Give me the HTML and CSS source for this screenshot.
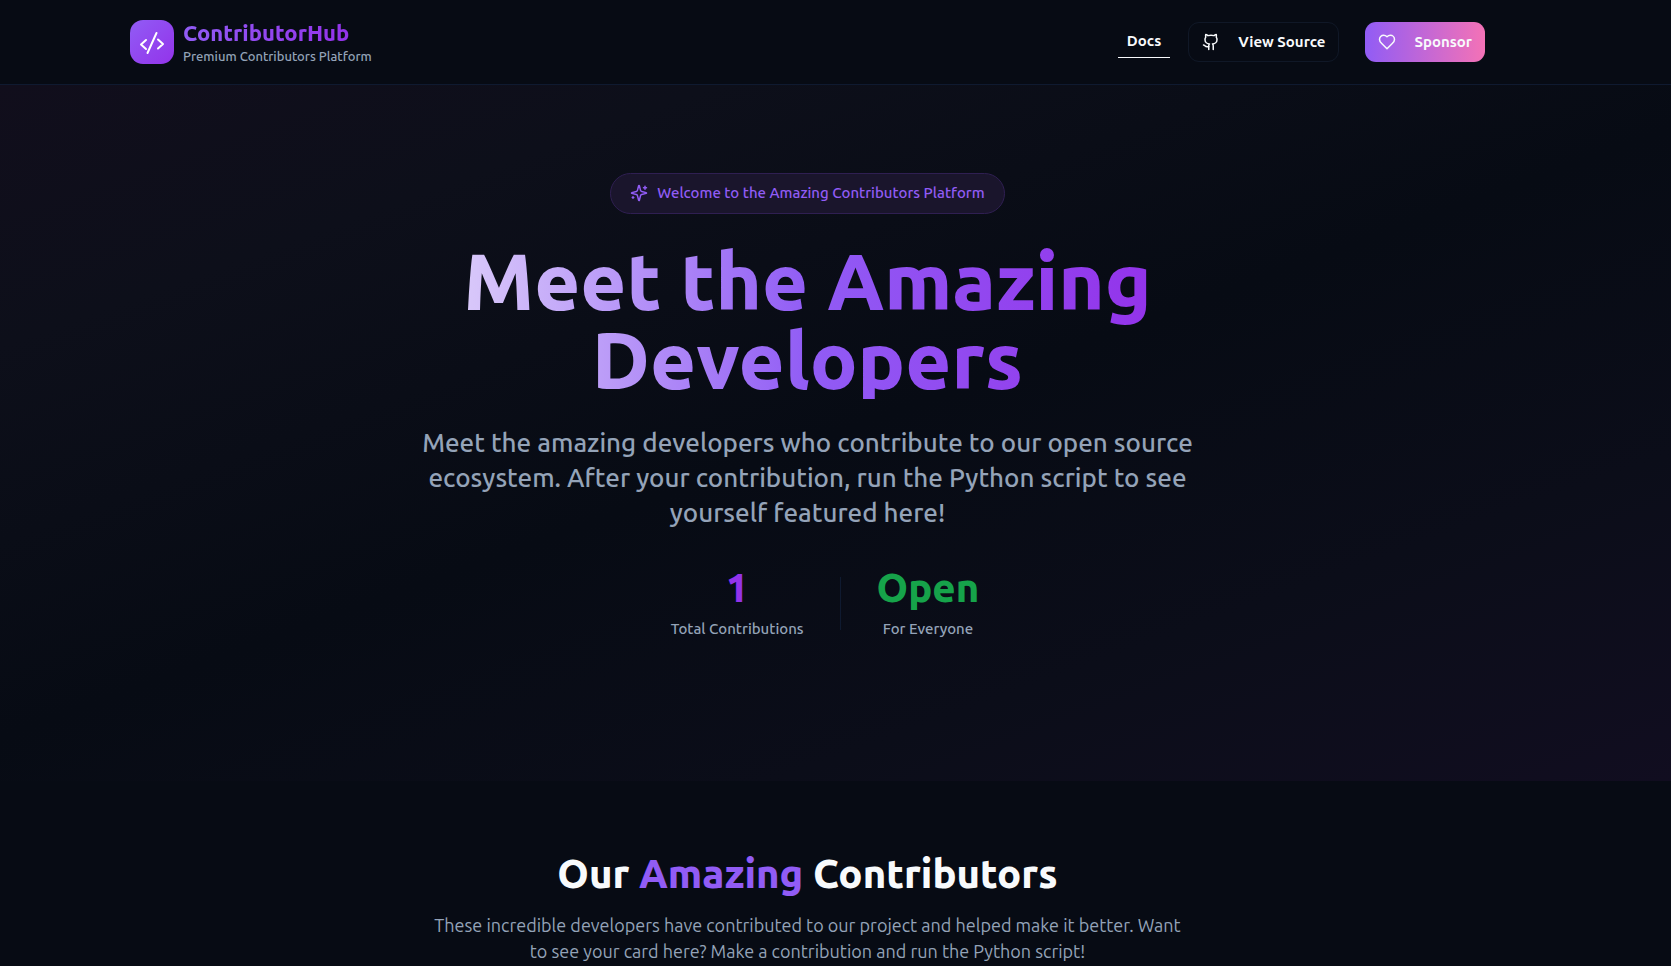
FILE: index.html
```html
<!DOCTYPE html>
<html lang="en">
<head>
<meta charset="utf-8">
<meta name="viewport" content="width=device-width, initial-scale=1">
<title>ContributorHub</title>
<link rel="stylesheet" href="styles.css">
</head>
<body>
<header class="topbar">
  <div class="topbar-inner">
    <a class="brand" href="#">
      <span class="brand-mark">
        <svg viewBox="0 0 26 26" width="26" height="26" fill="none" stroke="#fff" stroke-width="2" stroke-linecap="round" stroke-linejoin="round" aria-hidden="true"><path d="M7 11 2 15.500l5 4.500M19 10.500l5 4.500-5 4.500M17.500 4l-9 20"/></svg>
      </span>
      <span class="brand-text">
        <span class="brand-name">ContributorHub</span>
        <span class="brand-tag">Premium Contributors Platform</span>
      </span>
    </a>
    <nav class="nav">
      <a class="nav-link" href="#docs">Docs</a>
      <a class="btn btn-outline" href="#source">
        <svg class="icon" viewBox="0 0 24 24" aria-hidden="true"><path d="M15 22v-4a4.800 4.800 0 0 0-1-3.500c3 0 6-2 6-5.500.080-1.250-.270-2.480-1-3.500.280-1.150.280-2.350 0-3.500 0 0-1 0-3 1.500-2.640-.500-5.360-.500-8 0C6 2 5 2 5 2c-.300 1.150-.300 2.350 0 3.500A5.403 5.403 0 0 0 4 9c0 3.500 3 5.500 6 5.500-.390.490-.680 1.050-.850 1.650-.170.600-.220 1.230-.150 1.850v4"/><path d="M9 18c-4.510 2-5-2-7-2"/></svg>
        <span>View Source</span>
      </a>
      <a class="btn btn-sponsor" href="#sponsor">
        <svg class="icon" viewBox="0 0 24 24" aria-hidden="true"><path d="M19 14c1.490-1.460 3-3.210 3-5.500A5.500 5.500 0 0 0 16.500 3c-1.760 0-3 .500-4.500 2-1.500-1.500-2.740-2-4.500-2A5.500 5.500 0 0 0 2 8.500c0 2.300 1.500 4.050 3 5.500l7 7Z"/></svg>
        <span>Sponsor</span>
      </a>
    </nav>
  </div>
</header>
<main>
  <section class="hero">
    <div class="hero-inner">
      <div class="badge">
        <svg class="icon" viewBox="0 0 24 24" aria-hidden="true"><path d="M9.937 15.500A2 2 0 0 0 8.500 14.063l-6.135-1.582a.5.5 0 0 1 0-.962L8.500 9.936A2 2 0 0 0 9.937 8.500l1.582-6.135a.5.5 0 0 1 .963 0L14.063 8.500A2 2 0 0 0 15.500 9.937l6.135 1.581a.5.5 0 0 1 0 .964L15.500 14.063a2 2 0 0 0-1.437 1.437l-1.582 6.135a.5.5 0 0 1-.963 0z"/><path d="M20 3v4M22 5h-4M4 17v2M5 18H3"/></svg>
        <span>Welcome to the Amazing Contributors Platform</span>
      </div>
      <h1 class="hero-title">Meet the Amazing<br>Developers</h1>
      <p class="hero-lead">Meet the amazing developers who contribute to our open source<br>ecosystem. After your contribution, run the Python script to see<br>yourself featured here!</p>
      <div class="stats">
        <div class="stat"><span class="stat-value">1</span><span class="stat-label">Total Contributions</span></div>
        <div class="stat-divider"></div>
        <div class="stat"><span class="stat-value stat-open">Open</span><span class="stat-label">For Everyone</span></div>
      </div>
    </div>
  </section>
  <section class="contributors">
    <h2 class="section-title">Our <span class="accent">Amazing</span> Contributors</h2>
    <p class="section-lead">These incredible developers have contributed to our project and helped make it better. Want<br>to see your card here? Make a contribution and run the Python script!</p>
  </section>
</main>
</body>
</html>
```
FILE: styles.css
```css
* { box-sizing: border-box; }

:root {
  --bg: #070b14;
  --fg: #f8fafc;
  --muted: #94a3b8;
  --line: #0f1a30;
  --violet: #915cf5;
  --purple: #9333ea;
  --gutter: 56px;
}

html { overflow: hidden; background: var(--bg); }

body {
  margin: 0;
  background: var(--bg);
  color: var(--fg);
  font-family: Ubuntu, "Noto Sans", sans-serif;
  font-size: 15px;
  font-weight: 500;
  line-height: 22px;
}

a { color: inherit; text-decoration: none; }

.icon {
  width: 18px;
  height: 18px;
  flex: none;
  fill: none;
  stroke: currentColor;
  stroke-width: 2;
  stroke-linecap: round;
  stroke-linejoin: round;
}

.topbar {
  padding-right: var(--gutter);
  border-bottom: 1px solid var(--line);
}

.topbar-inner {
  display: flex;
  align-items: center;
  justify-content: space-between;
  max-width: 1355px;
  height: 84px;
  margin: 0 auto;
}

.brand { display: flex; align-items: center; gap: 9px; }

.brand-mark {
  display: grid;
  place-items: center;
  width: 44px;
  height: 44px;
  border-radius: 13px;
  background: linear-gradient(135deg, var(--violet), var(--purple));
}

.brand-text { display: flex; flex-direction: column; align-items: flex-start; }

.brand-name {
  background: linear-gradient(90deg, var(--violet), var(--purple));
  background-clip: text;
  color: transparent;
  font-size: 22px;
  font-weight: 800;
  line-height: 28px;
}

.brand-tag { color: var(--muted); font-size: 13px; line-height: 18px; }

.nav { display: flex; align-items: center; font-weight: 600; }

.nav-link {
  margin-right: 18px;
  padding: 4px 9px 5px;
  border-bottom: 1px solid var(--fg);
}

.btn {
  display: flex;
  align-items: center;
  gap: 18px;
  height: 40px;
  padding: 0 13px;
  border: 1px solid transparent;
  border-radius: 11px;
}

.btn-outline { margin-right: 26px; border-color: #101827; }

.btn-sponsor {
  border: 0;
  background: linear-gradient(90deg, var(--violet), #f472b6);
}

.hero {
  padding: 88px var(--gutter) 141px 0;
  background: linear-gradient(160deg, #110e1c 0%, #0d0f1a 20%, #070b14 50%, #0b0d19 75%, #110d20 100%);
}

.hero-inner {
  display: flex;
  flex-direction: column;
  align-items: center;
  text-align: center;
}

.badge {
  display: flex;
  align-items: center;
  gap: 9px;
  padding: 8px 19px 9px;
  border: 1px solid #2f1f52;
  border-radius: 21px;
  background: #1a152c;
  color: var(--violet);
}

.hero-title {
  margin: 27px 0 26px;
  background: linear-gradient(90deg, #d9c9fa, var(--violet) 50%, var(--purple));
  background-clip: text;
  color: transparent;
  font-size: 79px;
  font-weight: 800;
  line-height: 79px;
}

.hero-lead { margin: 0 0 36px; color: var(--muted); font-size: 26px; line-height: 35px; }

.stats { display: flex; align-items: center; gap: 36px; margin-left: 35px; }

.stat { display: flex; flex-direction: column; }

.stat-value { color: var(--purple); font-size: 40px; font-weight: 800; line-height: 44px; }

.stat-open { color: #16a34a; }

.stat-label { margin-top: 8px; color: var(--muted); }

.stat-divider { width: 1px; height: 53px; background: var(--line); }

.contributors { padding: 71px var(--gutter) 0 0; text-align: center; }

.section-title { margin: 0 0 16px; font-size: 40px; font-weight: 800; line-height: 44px; }

.accent { color: var(--violet); }

.section-lead { margin: 0; color: var(--muted); font-size: 18px; font-weight: 400; line-height: 26px; }
```
